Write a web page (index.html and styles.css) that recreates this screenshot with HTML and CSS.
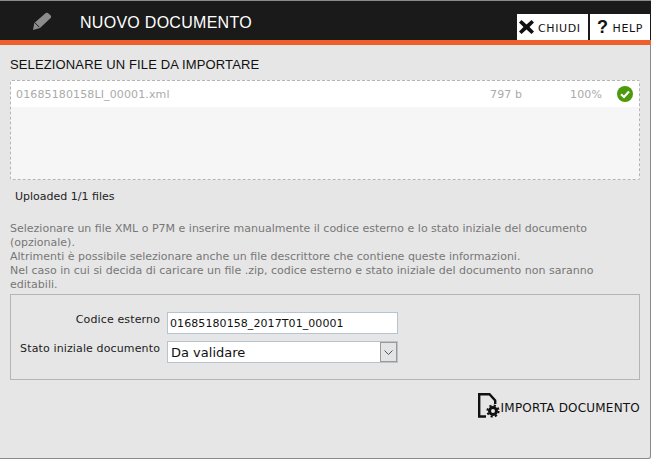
FILE: index.html
```html
<!DOCTYPE html>
<html lang="it">
<head>
<meta charset="utf-8">
<title>Nuovo documento</title>
<link rel="stylesheet" href="styles.css">
</head>
<body>
<div class="window">
  <header class="titlebar">
    <svg class="pencil" width="20" height="18" viewBox="0 0 20 18"><path fill="#8c8c8c" d="M13.500 1.200c.9-.7 2.200-.6 3 .2l2 1.800c.8.8.8 2 .1 2.800L8 16 1 18l1.300-7z"/><path fill="none" stroke="#1a1a1a" d="M2.800 10.600l4.500 4.600"/></svg>
    <h1 class="title">NUOVO DOCUMENTO</h1>
    <div class="actions">
      <button class="action action-close"><svg width="15" height="14" viewBox="0 0 15 14"><path fill="#111" d="M0 2.500 2.500 0l5 4.500L12.500 0 15 2.500 10.500 7l4.500 4.500-2.500 2.500-5-4.500-5 4.500L0 11.500 4.500 7z"/></svg><span class="action-label">CHIUDI</span></button>
      <button class="action action-help"><span class="qmark">?</span><span class="action-label">HELP</span></button>
    </div>
  </header>
  <main class="content">
    <h2 class="section-title">SELEZIONARE UN FILE DA IMPORTARE</h2>
    <div class="dropzone">
      <div class="file-row">
        <span class="file-name">01685180158LI_00001.xml</span>
        <span class="file-size">797 b</span>
        <span class="file-pct">100%</span>
        <svg class="file-ok" width="16" height="16" viewBox="0 0 16 16"><circle cx="8" cy="8" r="8" fill="#4d9a0c"/><path d="M4 8.200 7 11l5-5.500" fill="none" stroke="#fff" stroke-width="2.200"/></svg>
      </div>
    </div>
    <p class="uploaded">Uploaded 1/1 files</p>
    <p class="help-text">Selezionare un file XML o P7M e inserire manualmente il codice esterno e lo stato iniziale del documento (opzionale).<br>Altrimenti è possibile selezionare anche un file descrittore che contiene queste informazioni.<br>Nel caso in cui si decida di caricare un file .zip, codice esterno e stato iniziale del documento non saranno editabili.</p>
    <form class="fields">
      <div class="field">
        <label class="field-label" for="codice">Codice esterno</label>
        <input class="text-input" id="codice" type="text" value="01685180158_2017T01_00001">
      </div>
      <div class="field">
        <label class="field-label">Stato iniziale documento</label>
        <div class="select">
          <span class="select-value">Da validare</span>
          <span class="select-arrow"><svg width="9" height="5" viewBox="0 0 9 5"><path d="M.5.5l4 4 4-4" fill="none" stroke="#555"/></svg></span>
        </div>
      </div>
    </form>
    <div class="footer">
      <button class="import">
        <svg class="import-icon" width="23" height="25" viewBox="0 0 23 25"><path d="M8 23.500H1.200V1.200h10.300l5.700 6.300v3.500" fill="none" stroke="#111" stroke-width="2.400"/><circle cx="15" cy="18" r="3.500" fill="none" stroke="#111" stroke-width="3"/><circle cx="15" cy="18" r="5.600" fill="none" stroke="#111" stroke-width="2" stroke-dasharray="2.200 2.200"/></svg><span class="import-label">IMPORTA DOCUMENTO</span>
      </button>
    </div>
  </main>
</div>
</body>
</html>
```
FILE: styles.css
```css
* { box-sizing: border-box; }
html, body { margin: 0; height: 100%; }
body { background: #e6e6e6; font-family: "DejaVu Sans", Verdana, sans-serif; font-size: 11px; overflow: hidden; }
.window { width: 651px; height: 459px; display: flex; flex-direction: column; border-top: 1px solid #8a8a8a; border-right: 1px solid #8a8a8a; border-bottom: 1px solid #8a8a8a; border-bottom-right-radius: 3px; }
.titlebar { height: 44px; flex: none; background: #1a1a1a; border-bottom: 5px solid #ef5f2d; display: flex; align-items: center; padding-left: 32px; margin-right: -1px; }
.pencil { margin-top: 1px; }
.title { margin: 5px 0 0 28px; font: 400 16px "Liberation Sans", Arial, sans-serif; letter-spacing: .28px; color: #fff; }
.actions { margin-left: auto; margin-right: 1px; align-self: flex-end; display: flex; gap: 2px; height: 26px; }
.action { border: 0; background: #fff; color: #111; font: 11px "DejaVu Sans", Verdana, sans-serif; letter-spacing: .6px; display: flex; align-items: center; padding: 0; height: 26px; }
.action-label { margin-top: 2px; }
.action-close { width: 71px; padding-left: 2px; gap: 4px; }
.action-help { width: 60px; padding-left: 7px; gap: 4px; }
.qmark { font: 700 18px "Liberation Sans", Arial, sans-serif; }
.content { flex: 1; padding: 12px 10px 0; display: flex; flex-direction: column; }
.section-title { margin: 0; font: 400 13px/16px "Liberation Sans", Arial, sans-serif; letter-spacing: .13px; color: #111; }
.dropzone { margin-top: 7px; height: 100px; background: #f6f6f6; border: 1px dashed #b5b5b5; border-radius: 2px; }
.file-row { height: 26px; background: #fff; display: flex; align-items: center; color: #aaa; padding-left: 5px; letter-spacing: .13px; }
.file-name { flex: 1; }
.file-size { width: 80px; }
.file-pct { width: 47px; }
.file-ok { margin-right: 6px; }
.uploaded { margin: 10px 0 0 5px; line-height: 14px; color: #222; }
.help-text { margin: 18px 0 0; line-height: 14px; color: #777; }
.fields { margin-top: 2px; height: 86px; border: 1px solid #b5b5b5; padding-top: 17px; display: flex; flex-direction: column; gap: 7px; }
.field { display: flex; gap: 7px; align-items: flex-start; }
.field-label { width: 149px; padding-top: 1px; text-align: right; color: #222; line-height: 14px; letter-spacing: .13px; }
.text-input { width: 231px; height: 22px; border: 1px solid #b5c4d0; padding: 0 2px; font: 11px "DejaVu Sans", Verdana, sans-serif; letter-spacing: .08px; color: #111; background: #fff; }
.select { width: 231px; height: 22px; border: 1px solid #b5c4d0; background: #fff; display: flex; align-items: center; justify-content: space-between; }
.select-value { padding: 1px 0 0 3px; font-size: 13px; color: #111; }
.select-arrow { width: 17px; height: 20px; background: #e4e4e4; border: 1px solid #9a9a9a; display: flex; align-items: center; justify-content: center; }
.footer { display: flex; justify-content: flex-end; margin-top: 13px; }
.import { border: 0; background: none; padding: 0; display: flex; align-items: flex-end; color: #111; font: 12px "DejaVu Sans", Verdana, sans-serif; letter-spacing: .2px; height: 25px; }
.import-label { padding-bottom: 3px; }
```
